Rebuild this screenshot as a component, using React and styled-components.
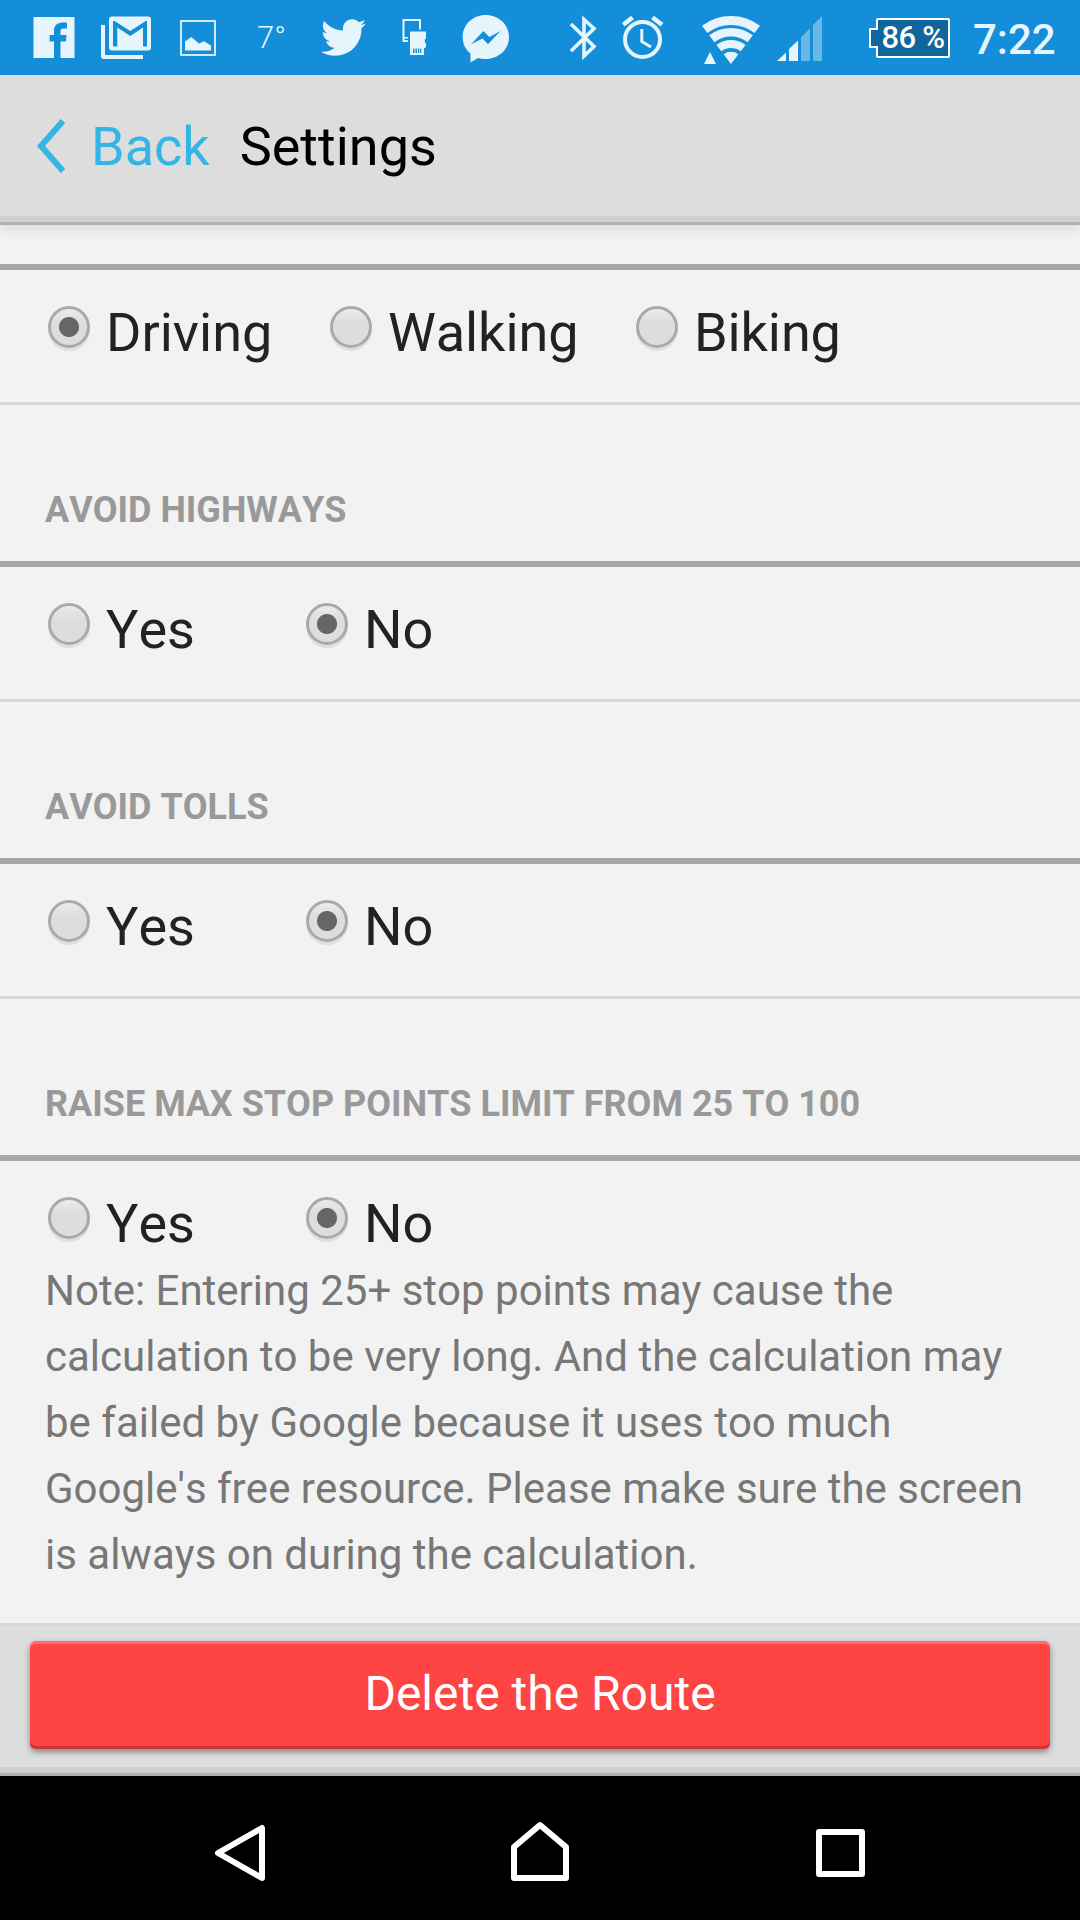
import React, { useState } from 'react';
import styled, { createGlobalStyle } from 'styled-components';
import { FaTwitter } from 'react-icons/fa';

const GlobalStyle = createGlobalStyle`
*{
    box-sizing:border-box;
}

body{
    margin:0;
    background:#f2f2f2;
    font-family:Roboto, "Liberation Sans", sans-serif;
    font-kerning:none;
}
`;

const Screen = styled.div`
display:flex;
flex-direction:column;
width:1080px;
height:1920px;
background:#f2f2f2;
overflow:hidden;
`;

/* ---------- status bar ---------- */

const StatusBar = styled.div`
display:flex;
align-items:center;
flex:none;
height:75px;
background:#158ed9;
color:#e6f4fc;
`;

const Glyph = styled.svg`
display:block;
flex:none;
height:75px;
margin-left:${({ $gap }) => $gap}px;
`;

const Bird = styled(FaTwitter)`
flex:none;
width:45px;
height:45px;
margin-left:39px;
`;

const Temperature = styled.span`
width:25px;
margin-left:41px;
font-size:31px;
font-weight:300;
line-height:75px;
white-space:nowrap;
`;

const Battery = styled.div`
display:flex;
align-items:center;
margin-left:47px;
color:#fff;
`;

const BatteryTip = styled.div`
width:9px;
height:20px;
margin-right:-2px;
border:2px solid #fff;
border-right:none;
background:#0f659c;
z-index:1;
`;

const BatteryBody = styled.div`
width:74px;
height:40px;
border:2px solid #fff;
border-radius:2px;
background:#0f659c;
font-size:31px;
font-weight:500;
line-height:35px;
text-align:center;
letter-spacing:-0.7px;
white-space:nowrap;
`;

const Clock = styled.span`
margin-left:23px;
font-size:42px;
font-weight:500;
line-height:75px;
padding-top:3px;
`;

/* ---------- header ---------- */

const Header = styled.header`
display:flex;
align-items:center;
flex:none;
height:150px;
padding:0 0 3px 37px;
border-bottom:3px solid #b0b0b0;
background:#ddd;
box-shadow:inset 0 -6px #d0d0d0, 0 8px 6px rgba(0,0,0,0.06);
font-size:54px;
line-height:64px;
`;

const BackButton = styled.button`
display:flex;
align-items:center;
padding:0;
border:none;
background:none;
color:#33b5e5;
font:inherit;
font-kerning:inherit;
cursor:pointer;

svg{
    display:block;
    margin:-2px 25px 0 0;
}
`;

const Title = styled.h1`
margin:0 0 0 30px;
color:#000;
font-size:54px;
font-weight:400;
`;

/* ---------- settings ---------- */

const Content = styled.main`
flex:1;
padding-top:39px;
`;

const SectionTitle = styled.h2`
height:156px;
margin:0;
padding:84px 45px 0;
color:#999;
font-size:36px;
font-weight:700;
line-height:42px;
text-transform:uppercase;
`;

const Options = styled.div`
height:${({ $open }) => ($open ? 'auto' : '141px')};
padding:30px 48px 0;
border-top:6px solid #a7a7a7;
border-bottom:${({ $open }) => ($open ? 'none' : '3px solid #d8d8d8')};
`;

const RadioRow = styled.div`
display:flex;
`;

const RadioLabel = styled.label`
display:flex;
width:${({ $width }) => $width}px;
height:66px;
color:#222;
font-size:54px;
line-height:66px;
white-space:nowrap;
cursor:pointer;

& + &{
    letter-spacing:-0.1px;
}

& + & input{
    margin-right:15px;
}
`;

const Radio = styled.input`
appearance:none;
flex:none;
width:42px;
height:42px;
margin:6px 16px 0 0;
border:3px solid #a9a9a9;
border-radius:50%;
background:${({ checked }) => checked
        ? 'radial-gradient(circle at center, #666 9.5px, transparent 10.5px), linear-gradient(#eee, #ddd 40%)'
        : 'linear-gradient(#eee, #ddd 40%)'};
background-origin:border-box;
box-shadow:0 3px 0 #dfdfdf;
`;

const Note = styled.p`
margin:1px -3px 0;
color:#777;
font-size:42px;
line-height:66px;
white-space:pre;
`;

/* ---------- bottom ---------- */

const Footer = styled.footer`
flex:none;
height:153px;
padding:15px 30px 0;
border-top:3px solid #d8d8d8;
border-bottom:3px solid #b0b0b0;
background:#ddd;
box-shadow:inset 0 -6px #d0d0d0;
`;

const DeleteButton = styled.button`
display:block;
width:100%;
height:108px;
padding:0 0 3px;
border:none;
border-radius:6px;
background:#ff4444;
box-shadow:inset 0 3px #ff6b6b, inset 0 -3px #cc3636, 0 3px 6px rgba(0,0,0,0.4);
color:#fff;
font-family:inherit;
font-size:48px;
cursor:pointer;
`;

const NavBar = styled.nav`
display:flex;
flex:none;
height:144px;
padding-left:210px;
background:#000;

svg{
    display:block;
    flex:none;
}
`;

const NavGlyph = styled.svg`
margin-right:${({ $gap }) => $gap}px;
`;

// every glyph is drawn in bar coordinates, x is where its box starts
const StatusGlyph = ({ x, width, gap, children }) => (
    <Glyph $gap={gap} width={width} viewBox={`${x} 0 ${width} 75`} fill="currentColor">
        {children}
    </Glyph>
);

const Status = () => (
    <StatusBar>
        <StatusGlyph x={33} width={42} gap={33}>
            <path d="M33.5 17H74.5V58H60.5V41.5H65.8L66.6 35H60.5V31.5C60.5 29.3 61.3 28.5 63.5 28.5H67V22.8C60 21.9 54 23.5 54 31V35H49.6V41.5H54V58H33.5Z" />
        </StatusGlyph>
        <StatusGlyph x={101} width={50} gap={26}>
            <path d="M101 25H105V55H143V59H104Q101 59 101 56Z" />
            <path fillRule="evenodd" d="M112 16.5H148Q151 16.5 151 19.5V47.5Q151 50.5 148 50.5H112Q109 50.5 109 47.5V19.5Q109 16.5 112 16.5ZM113 46.5H117.3V27.5L130.3 36L143 27.5V46.5H147V21H145.7L130.3 31L114.5 21H113Z" />
        </StatusGlyph>
        <StatusGlyph x={180} width={36} gap={29}>
            <rect x="181" y="21" width="34" height="34" fill="none" stroke="currentColor" strokeWidth="1.8" />
            <path d="M185 50.5V41.5L191.3 37L199 43.5L204 41.3L211 45.5V50.5Z" />
        </StatusGlyph>
        <Temperature>7°</Temperature>
        <Bird />
        <StatusGlyph x={402} width={24} gap={36}>
            <path d="M402.5 19H421V29.5H419V21H404.5V37H408V38.5H404.5V40H408V42H402.5Z" />
            <path fillRule="evenodd" d="M410 31.5H426V38.5L424.8 39.5V42L426 43.5V47L424 48.5V55H410ZM413 48.5V53H414.5V48.5ZM415.5 48.5V53H417V48.5ZM418 48.5V53H419.2V48.5ZM420 48.5V53H421.2V48.5Z" />
        </StatusGlyph>
        <StatusGlyph x={462} width={48} gap={36}>
            <path fillRule="evenodd" d="M485.7 15C498.5 15 509 24.5 509 37S498.5 59 485.7 59C482.8 59 480.3 58.8 478 58L470.5 62.5V53.5C465.5 49.5 462.7 44 462.7 37C462.7 24.5 473 15 485.7 15ZM483.5 31L471 44.3L482.5 38.5L488 44.3L500.5 31L489.3 37Z" />
        </StatusGlyph>
        <StatusGlyph x={569} width={28} gap={59}>
            <path fill="none" stroke="currentColor" strokeWidth="3.6" d="M571 24L594 46.5L584 56V19.5L594 28.5L571 51" />
        </StatusGlyph>
        <StatusGlyph x={621} width={43} gap={24}>
            <circle cx="642.5" cy="39.5" r="17.5" fill="none" stroke="currentColor" strokeWidth="4" />
            <path fill="none" stroke="currentColor" strokeWidth="3" d="M641.8 29V41.5L651 47" />
            <path fill="none" stroke="currentColor" strokeWidth="4.5" d="M623.3 24.8L632.5 17.5M652.5 17.5L662 24.8" />
        </StatusGlyph>
        <StatusGlyph x={701} width={60} gap={37}>
            <g fill="none" stroke="currentColor">
                <path strokeWidth="9" d="M704.7 29.3A43.5 43.5 0 0 1 757.3 29.3" />
                <path strokeWidth="8.6" d="M711.8 38.7A31.8 31.8 0 0 1 750.2 38.7" />
                <path strokeWidth="8" d="M718.9 48.1A20 20 0 0 1 743.1 48.1" />
            </g>
            <path d="M731 64L723.6 54.2A12.3 12.3 0 0 1 738.4 54.2Z" />
            <path d="M704 64L710 52L716 64Z" />
        </StatusGlyph>
        <StatusGlyph x={777} width={45} gap={16}>
            <path d="M777 61L786 52.5V61ZM789 61V49L798 40.5V61Z" />
            <path opacity="0.4" d="M801 61V37L810 28.5V61ZM813 61V25L822 16V61Z" />
        </StatusGlyph>
        <Battery>
            <BatteryTip />
            <BatteryBody>86 %</BatteryBody>
        </Battery>
        <Clock>7:22</Clock>
    </StatusBar>
);

const Choice = ({ name, options, initial }) => {
    const [value, setValue] = useState(initial);

    return (
        <RadioRow>
            {options.map(({ label, width }) => (
                <RadioLabel key={label} $width={width}>
                    <Radio
                        type="radio"
                        name={name}
                        checked={value === label}
                        onChange={() => setValue(label)}
                    />
                    {label}
                </RadioLabel>
            ))}
        </RadioRow>
    );
};

const travelModes = [
    { label: 'Driving', width: 282 },
    { label: 'Walking', width: 306 },
    { label: 'Biking', width: 220 },
];

const yesNo = [
    { label: 'Yes', width: 258 },
    { label: 'No', width: 200 },
];

const noteText = `Note: Entering 25+ stop points may cause the
calculation to be very long. And the calculation may
be failed by Google because it uses too much
Google's free resource. Please make sure the screen
is always on during the calculation.`;

const App = () => {
    return (
        <Screen>
            <GlobalStyle />
            <Status />
            <Header>
                <BackButton>
                    <svg width="29" height="54" viewBox="0 0 29 54" fill="none" stroke="currentColor" strokeWidth="6">
                        <path d="M26 2L4 27L26 52" />
                    </svg>
                    Back
                </BackButton>
                <Title>Settings</Title>
            </Header>
            <Content>
                <Options>
                    <Choice name="mode" options={travelModes} initial="Driving" />
                </Options>
                <SectionTitle>Avoid highways</SectionTitle>
                <Options>
                    <Choice name="highways" options={yesNo} initial="No" />
                </Options>
                <SectionTitle>Avoid tolls</SectionTitle>
                <Options>
                    <Choice name="tolls" options={yesNo} initial="No" />
                </Options>
                <SectionTitle>Raise max stop points limit from 25 to 100</SectionTitle>
                <Options $open>
                    <Choice name="limit" options={yesNo} initial="No" />
                    <Note>{noteText}</Note>
                </Options>
            </Content>
            <Footer>
                <DeleteButton>Delete the Route</DeleteButton>
            </Footer>
            <NavBar>
                <NavGlyph $gap={236} width="60" height="144" viewBox="210 1776 60 144" fill="none" stroke="#fff" strokeWidth="6" strokeLinejoin="round">
                    <path d="M218 1853L262 1828V1878Z" />
                </NavGlyph>
                <NavGlyph $gap={236} width="68" height="144" viewBox="506 1776 68 144" fill="none" stroke="#fff" strokeWidth="6" strokeLinejoin="round">
                    <path d="M514 1878V1847L540 1825L566 1847V1878Z" />
                </NavGlyph>
                <NavGlyph $gap={0} width="60" height="144" viewBox="810 1776 60 144" fill="none" stroke="#fff" strokeWidth="6" strokeLinejoin="round">
                    <path d="M819 1832H862V1874H819Z" />
                </NavGlyph>
            </NavBar>
        </Screen>
    );
};

export default App;
